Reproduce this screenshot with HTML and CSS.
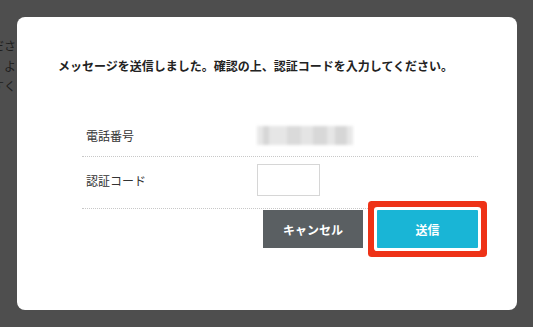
FILE: index.html
```html
<!DOCTYPE html>
<html lang="ja">
<head>
  <meta charset="UTF-8" />
  <meta name="viewport" content="width=device-width, initial-scale=1" />
  <title>認証コードの入力</title>
  <link rel="stylesheet" href="styles.css">
</head>
<body>
  <div class="page-behind">
    <p>ださ</p>
    <p>」よ</p>
    <p>すく</p>
  </div>

  <div class="overlay">
    <div class="modal">
      <p class="modal-message">メッセージを送信しました。確認の上、認証コードを入力してください。</p>

      <div class="form-table">
        <div class="form-row row-phone">
          <div class="form-label">電話番号</div>
          <div class="form-value">
            <div class="blurred-number"></div>
          </div>
        </div>
        <div class="form-row row-code">
          <div class="form-label">認証コード</div>
          <div class="form-value">
            <input class="code-input" type="text" />
          </div>
        </div>
      </div>

      <div class="button-row">
        <button class="btn btn-cancel">キャンセル</button>
        <button class="btn btn-send">送信</button>
      </div>
    </div>
  </div>
</body>
</html>
```

FILE: styles.css
```css
body {
  margin: 0;
  background: #4e4e4e;
  font-family: "Noto Sans CJK JP", "Noto Sans", sans-serif;
  color: #333;
  overflow: hidden;
}

.page-behind {
  position: absolute;
  top: 36px;
  left: -8px;
  width: 40px;
  font-size: 12px;
  line-height: 20px;
  color: #1e1e1e;
}

.page-behind p {
  margin: 0;
}

.overlay {
  position: relative;
  padding: 17px 16px 17px 17px;
}

.modal {
  background: #fff;
  border-radius: 8px;
  height: 293px;
  width: 500px;
  box-sizing: border-box;
  padding: 40px 39px 0 41px;
}

.modal-message {
  margin: 0;
  font-size: 12px;
  line-height: 18px;
  font-weight: bold;
  color: #222;
}

.form-table {
  margin: 41px 0 0 24px;
}

.form-row {
  display: flex;
  align-items: center;
  border-bottom: 1px dotted #c8c8c8;
}

.row-phone {
  padding: 10px 0 11px;
}

.row-code {
  padding: 7px 0 12px;
}

.form-label {
  width: 170px;
  padding-left: 4px;
  font-size: 12px;
  color: #333;
}

.blurred-number {
  width: 96px;
  height: 19px;
  background: linear-gradient(90deg,
    #e8e8e8 0, #e8e8e8 6px,
    #d6d6d6 6px, #d6d6d6 12px,
    #e6e6e6 12px, #e6e6e6 30px,
    #dadada 30px, #dadada 44px,
    #e4e4e4 44px, #e4e4e4 56px,
    #d8d8d8 56px, #d8d8d8 70px,
    #e6e6e6 70px, #e6e6e6 78px,
    #d6d6d6 78px, #d6d6d6 90px,
    #e8e8e8 90px);
  filter: blur(1.5px);
  margin-left: 1px;
}

.code-input {
  width: 63px;
  height: 32px;
  box-sizing: border-box;
  border: 1px solid #d6d6d6;
  margin: 0 0 0 1px;
  padding: 0 6px;
  font-family: inherit;
}

.button-row {
  display: flex;
  justify-content: flex-end;
  gap: 14px;
  margin-top: 1px;
}

.btn {
  height: 38px;
  border: none;
  color: #fff;
  font-family: inherit;
  font-size: 12px;
  font-weight: bold;
  padding: 0;
}

.btn-cancel {
  width: 100px;
  background: #5a5f62;
}

.btn-send {
  width: 101px;
  background: #19b5d6;
  border-radius: 1px;
  box-shadow: 0 0 0 3px #fff, 0 0 0 9px #ee3217;
}
```
